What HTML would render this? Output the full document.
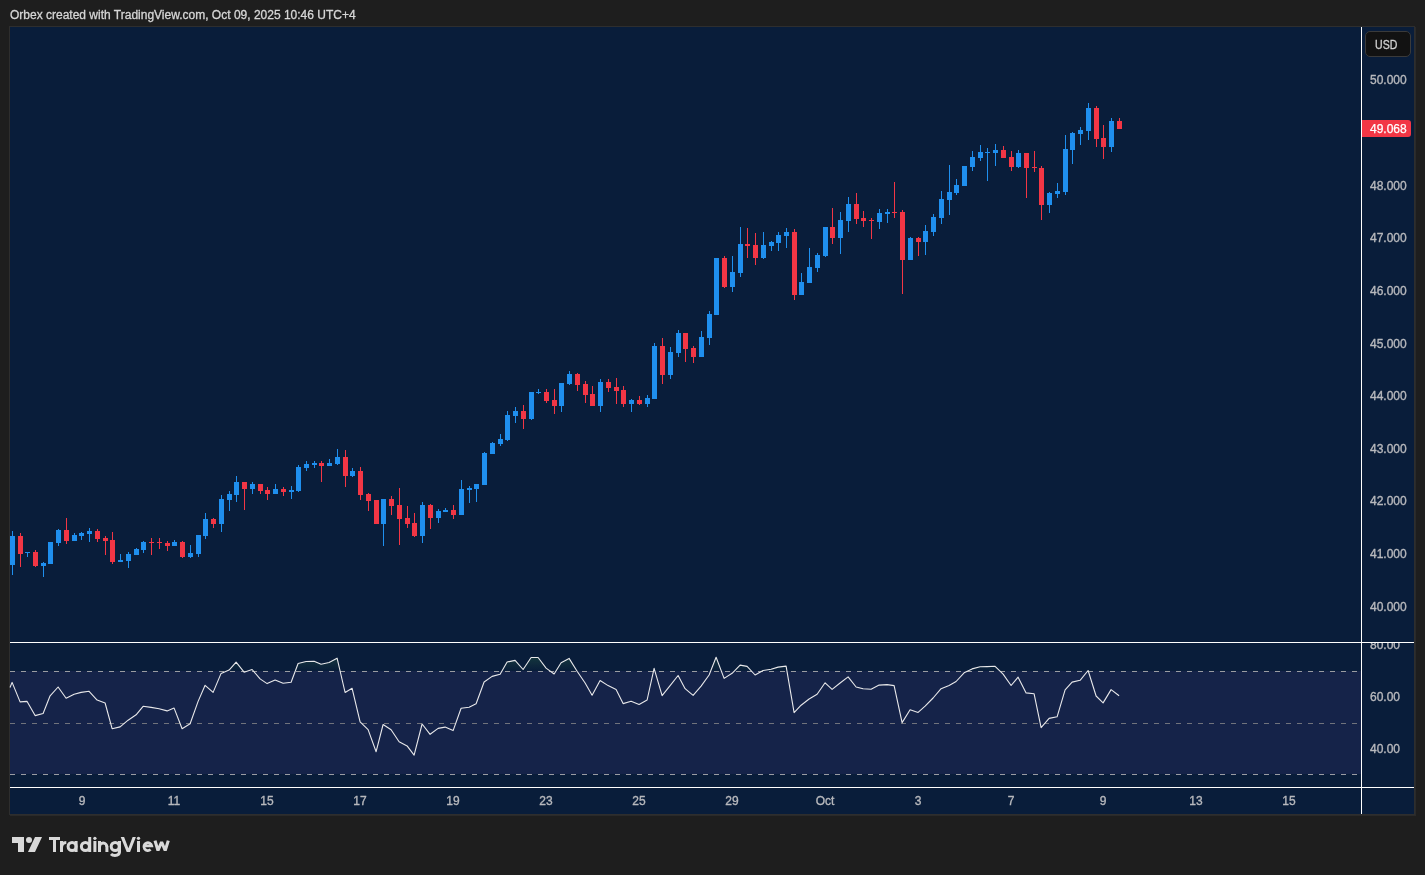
<!DOCTYPE html>
<html><head><meta charset="utf-8"><style>
html,body{margin:0;padding:0;}
body{-webkit-font-smoothing:antialiased;width:1425px;height:875px;background:#1e1e1e;position:relative;overflow:hidden;font-family:"Liberation Sans",sans-serif;}
.title{will-change:transform;-webkit-text-stroke:0.3px #d6d6d6;position:absolute;left:10px;top:8px;font-size:12px;color:#d6d6d6;white-space:nowrap;}
.frame{position:absolute;left:9px;top:26px;width:1404px;height:787px;border:1px solid #2e2e2e;background:#091d3a;box-shadow:1px 1px 0 #2a2a2a;}
svg.ch{position:absolute;left:0;top:0;}
.pl{will-change:transform;-webkit-text-stroke:0.35px #b8b9bd;position:absolute;left:1370px;width:52px;text-align:left;font-size:12px;line-height:14px;color:#b8b9bd;}
.rclip{position:absolute;left:1362px;top:643px;width:52px;height:144px;overflow:hidden;}
.rclip .pl{left:8px;}
.tl{will-change:transform;-webkit-text-stroke:0.35px #b8b9bd;position:absolute;top:794px;width:60px;text-align:center;font-size:12px;line-height:14px;color:#b8b9bd;}
.usd{will-change:transform;position:absolute;left:1365px;top:31px;width:44px;height:24px;border:1px solid #3a3a3a;border-radius:5px;background:#121212;color:#d0d0d0;font-size:12px;line-height:24px;box-sizing:content-box;}
.usd span{position:absolute;left:9px;top:1px;transform:scaleX(0.88);transform-origin:0 0;-webkit-text-stroke:0.3px #d0d0d0;}
.last{will-change:transform;position:absolute;left:1362px;top:120px;width:49px;height:17px;background:#f23645;border-radius:0 3px 3px 0;color:#fff;font-size:12px;line-height:17px;}
.last span{position:absolute;left:8px;top:1px;-webkit-text-stroke:0.25px #fff;}
.logo{position:absolute;left:12px;top:834px;}
.logotxt{will-change:transform;position:absolute;left:49px;top:834px;font-size:20px;font-weight:bold;letter-spacing:0.4px;color:#d9d9d9;white-space:nowrap;}
</style></head><body>
<div class="title">Orbex created with TradingView.com, Oct 09, 2025 10:46 UTC+4</div>
<div class="frame"></div>
<svg class="ch" width="1425" height="875">
<g clip-path="url(#cm)" shape-rendering="crispEdges">
<rect x="12" y="531" width="1" height="44" fill="#1f8fee"/>
<rect x="10" y="536" width="5" height="29" fill="#1f8fee"/>
<rect x="20" y="533" width="1" height="34" fill="#f23645"/>
<rect x="18" y="536" width="5" height="18" fill="#f23645"/>
<rect x="27" y="552" width="1" height="5" fill="#1f8fee"/>
<rect x="25" y="552" width="5" height="1" fill="#1f8fee"/>
<rect x="35" y="550" width="1" height="17" fill="#f23645"/>
<rect x="33" y="552" width="5" height="14" fill="#f23645"/>
<rect x="43" y="562" width="1" height="15" fill="#1f8fee"/>
<rect x="41" y="563" width="5" height="3" fill="#1f8fee"/>
<rect x="50" y="542" width="1" height="22" fill="#1f8fee"/>
<rect x="48" y="542" width="5" height="22" fill="#1f8fee"/>
<rect x="58" y="529" width="1" height="17" fill="#1f8fee"/>
<rect x="56" y="530" width="5" height="13" fill="#1f8fee"/>
<rect x="66" y="518" width="1" height="26" fill="#f23645"/>
<rect x="64" y="530" width="5" height="11" fill="#f23645"/>
<rect x="74" y="533" width="1" height="8" fill="#1f8fee"/>
<rect x="72" y="535" width="5" height="6" fill="#1f8fee"/>
<rect x="81" y="532" width="1" height="8" fill="#1f8fee"/>
<rect x="79" y="533" width="5" height="3" fill="#1f8fee"/>
<rect x="89" y="528" width="1" height="14" fill="#1f8fee"/>
<rect x="87" y="531" width="5" height="3" fill="#1f8fee"/>
<rect x="97" y="529" width="1" height="13" fill="#f23645"/>
<rect x="95" y="531" width="5" height="8" fill="#f23645"/>
<rect x="105" y="536" width="1" height="19" fill="#f23645"/>
<rect x="103" y="538" width="5" height="3" fill="#f23645"/>
<rect x="112" y="532" width="1" height="32" fill="#f23645"/>
<rect x="110" y="540" width="5" height="22" fill="#f23645"/>
<rect x="120" y="554" width="1" height="8" fill="#1f8fee"/>
<rect x="118" y="560" width="5" height="2" fill="#1f8fee"/>
<rect x="128" y="552" width="1" height="16" fill="#1f8fee"/>
<rect x="126" y="554" width="5" height="7" fill="#1f8fee"/>
<rect x="136" y="548" width="1" height="7" fill="#1f8fee"/>
<rect x="134" y="549" width="5" height="6" fill="#1f8fee"/>
<rect x="143" y="541" width="1" height="12" fill="#1f8fee"/>
<rect x="141" y="542" width="5" height="8" fill="#1f8fee"/>
<rect x="151" y="538" width="1" height="17" fill="#f23645"/>
<rect x="149" y="542" width="5" height="1" fill="#f23645"/>
<rect x="159" y="538" width="1" height="11" fill="#f23645"/>
<rect x="157" y="542" width="5" height="1" fill="#f23645"/>
<rect x="167" y="541" width="1" height="10" fill="#f23645"/>
<rect x="165" y="543" width="5" height="3" fill="#f23645"/>
<rect x="174" y="540" width="1" height="6" fill="#1f8fee"/>
<rect x="172" y="542" width="5" height="4" fill="#1f8fee"/>
<rect x="182" y="541" width="1" height="17" fill="#f23645"/>
<rect x="180" y="542" width="5" height="15" fill="#f23645"/>
<rect x="190" y="545" width="1" height="13" fill="#1f8fee"/>
<rect x="188" y="553" width="5" height="4" fill="#1f8fee"/>
<rect x="198" y="535" width="1" height="22" fill="#1f8fee"/>
<rect x="196" y="535" width="5" height="19" fill="#1f8fee"/>
<rect x="205" y="513" width="1" height="26" fill="#1f8fee"/>
<rect x="203" y="519" width="5" height="17" fill="#1f8fee"/>
<rect x="213" y="518" width="1" height="10" fill="#f23645"/>
<rect x="211" y="519" width="5" height="5" fill="#f23645"/>
<rect x="221" y="495" width="1" height="37" fill="#1f8fee"/>
<rect x="219" y="499" width="5" height="25" fill="#1f8fee"/>
<rect x="229" y="491" width="1" height="20" fill="#1f8fee"/>
<rect x="227" y="494" width="5" height="6" fill="#1f8fee"/>
<rect x="236" y="476" width="1" height="26" fill="#1f8fee"/>
<rect x="234" y="482" width="5" height="13" fill="#1f8fee"/>
<rect x="244" y="482" width="1" height="28" fill="#f23645"/>
<rect x="242" y="482" width="5" height="7" fill="#f23645"/>
<rect x="252" y="482" width="1" height="12" fill="#1f8fee"/>
<rect x="250" y="484" width="5" height="5" fill="#1f8fee"/>
<rect x="260" y="484" width="1" height="10" fill="#f23645"/>
<rect x="258" y="484" width="5" height="7" fill="#f23645"/>
<rect x="267" y="487" width="1" height="13" fill="#f23645"/>
<rect x="265" y="490" width="5" height="4" fill="#f23645"/>
<rect x="275" y="484" width="1" height="10" fill="#1f8fee"/>
<rect x="273" y="489" width="5" height="5" fill="#1f8fee"/>
<rect x="283" y="487" width="1" height="9" fill="#f23645"/>
<rect x="281" y="489" width="5" height="3" fill="#f23645"/>
<rect x="291" y="486" width="1" height="13" fill="#1f8fee"/>
<rect x="289" y="490" width="5" height="2" fill="#1f8fee"/>
<rect x="298" y="465" width="1" height="27" fill="#1f8fee"/>
<rect x="296" y="467" width="5" height="24" fill="#1f8fee"/>
<rect x="306" y="461" width="1" height="10" fill="#1f8fee"/>
<rect x="304" y="464" width="5" height="4" fill="#1f8fee"/>
<rect x="314" y="461" width="1" height="7" fill="#1f8fee"/>
<rect x="312" y="463" width="5" height="2" fill="#1f8fee"/>
<rect x="321" y="461" width="1" height="21" fill="#f23645"/>
<rect x="319" y="463" width="5" height="3" fill="#f23645"/>
<rect x="329" y="459" width="1" height="7" fill="#1f8fee"/>
<rect x="327" y="463" width="5" height="3" fill="#1f8fee"/>
<rect x="337" y="449" width="1" height="16" fill="#1f8fee"/>
<rect x="335" y="457" width="5" height="7" fill="#1f8fee"/>
<rect x="345" y="450" width="1" height="37" fill="#f23645"/>
<rect x="343" y="457" width="5" height="19" fill="#f23645"/>
<rect x="352" y="468" width="1" height="9" fill="#1f8fee"/>
<rect x="350" y="471" width="5" height="5" fill="#1f8fee"/>
<rect x="360" y="467" width="1" height="33" fill="#f23645"/>
<rect x="358" y="471" width="5" height="24" fill="#f23645"/>
<rect x="368" y="493" width="1" height="18" fill="#f23645"/>
<rect x="366" y="494" width="5" height="7" fill="#f23645"/>
<rect x="376" y="500" width="1" height="24" fill="#f23645"/>
<rect x="374" y="500" width="5" height="24" fill="#f23645"/>
<rect x="383" y="499" width="1" height="47" fill="#1f8fee"/>
<rect x="381" y="499" width="5" height="25" fill="#1f8fee"/>
<rect x="391" y="496" width="1" height="19" fill="#f23645"/>
<rect x="389" y="499" width="5" height="7" fill="#f23645"/>
<rect x="399" y="488" width="1" height="57" fill="#f23645"/>
<rect x="397" y="505" width="5" height="14" fill="#f23645"/>
<rect x="407" y="506" width="1" height="22" fill="#f23645"/>
<rect x="405" y="518" width="5" height="6" fill="#f23645"/>
<rect x="414" y="513" width="1" height="24" fill="#f23645"/>
<rect x="412" y="523" width="5" height="13" fill="#f23645"/>
<rect x="422" y="502" width="1" height="41" fill="#1f8fee"/>
<rect x="420" y="505" width="5" height="31" fill="#1f8fee"/>
<rect x="430" y="504" width="1" height="25" fill="#f23645"/>
<rect x="428" y="505" width="5" height="13" fill="#f23645"/>
<rect x="438" y="509" width="1" height="14" fill="#1f8fee"/>
<rect x="436" y="511" width="5" height="7" fill="#1f8fee"/>
<rect x="445" y="508" width="1" height="4" fill="#1f8fee"/>
<rect x="443" y="510" width="5" height="2" fill="#1f8fee"/>
<rect x="453" y="505" width="1" height="14" fill="#f23645"/>
<rect x="451" y="510" width="5" height="5" fill="#f23645"/>
<rect x="461" y="480" width="1" height="35" fill="#1f8fee"/>
<rect x="459" y="489" width="5" height="26" fill="#1f8fee"/>
<rect x="469" y="486" width="1" height="17" fill="#1f8fee"/>
<rect x="467" y="488" width="5" height="2" fill="#1f8fee"/>
<rect x="476" y="484" width="1" height="18" fill="#1f8fee"/>
<rect x="474" y="484" width="5" height="5" fill="#1f8fee"/>
<rect x="484" y="452" width="1" height="33" fill="#1f8fee"/>
<rect x="482" y="453" width="5" height="32" fill="#1f8fee"/>
<rect x="492" y="442" width="1" height="12" fill="#1f8fee"/>
<rect x="490" y="443" width="5" height="11" fill="#1f8fee"/>
<rect x="500" y="434" width="1" height="12" fill="#1f8fee"/>
<rect x="498" y="439" width="5" height="5" fill="#1f8fee"/>
<rect x="507" y="411" width="1" height="30" fill="#1f8fee"/>
<rect x="505" y="415" width="5" height="25" fill="#1f8fee"/>
<rect x="515" y="407" width="1" height="16" fill="#1f8fee"/>
<rect x="513" y="411" width="5" height="5" fill="#1f8fee"/>
<rect x="523" y="405" width="1" height="24" fill="#f23645"/>
<rect x="521" y="411" width="5" height="8" fill="#f23645"/>
<rect x="531" y="392" width="1" height="28" fill="#1f8fee"/>
<rect x="529" y="392" width="5" height="27" fill="#1f8fee"/>
<rect x="538" y="389" width="1" height="5" fill="#1f8fee"/>
<rect x="536" y="392" width="5" height="1" fill="#1f8fee"/>
<rect x="546" y="389" width="1" height="14" fill="#f23645"/>
<rect x="544" y="392" width="5" height="9" fill="#f23645"/>
<rect x="554" y="389" width="1" height="25" fill="#f23645"/>
<rect x="552" y="400" width="5" height="6" fill="#f23645"/>
<rect x="561" y="383" width="1" height="29" fill="#1f8fee"/>
<rect x="559" y="383" width="5" height="23" fill="#1f8fee"/>
<rect x="569" y="371" width="1" height="14" fill="#1f8fee"/>
<rect x="567" y="374" width="5" height="10" fill="#1f8fee"/>
<rect x="577" y="373" width="1" height="18" fill="#f23645"/>
<rect x="575" y="374" width="5" height="11" fill="#f23645"/>
<rect x="585" y="381" width="1" height="22" fill="#f23645"/>
<rect x="583" y="384" width="5" height="11" fill="#f23645"/>
<rect x="592" y="386" width="1" height="20" fill="#f23645"/>
<rect x="590" y="394" width="5" height="12" fill="#f23645"/>
<rect x="600" y="379" width="1" height="33" fill="#1f8fee"/>
<rect x="598" y="382" width="5" height="24" fill="#1f8fee"/>
<rect x="608" y="379" width="1" height="13" fill="#f23645"/>
<rect x="606" y="382" width="5" height="6" fill="#f23645"/>
<rect x="616" y="378" width="1" height="26" fill="#f23645"/>
<rect x="614" y="387" width="5" height="4" fill="#f23645"/>
<rect x="623" y="386" width="1" height="21" fill="#f23645"/>
<rect x="621" y="390" width="5" height="14" fill="#f23645"/>
<rect x="631" y="399" width="1" height="13" fill="#1f8fee"/>
<rect x="629" y="400" width="5" height="4" fill="#1f8fee"/>
<rect x="639" y="396" width="1" height="9" fill="#f23645"/>
<rect x="637" y="400" width="5" height="4" fill="#f23645"/>
<rect x="647" y="395" width="1" height="12" fill="#1f8fee"/>
<rect x="645" y="398" width="5" height="6" fill="#1f8fee"/>
<rect x="654" y="343" width="1" height="56" fill="#1f8fee"/>
<rect x="652" y="346" width="5" height="53" fill="#1f8fee"/>
<rect x="662" y="338" width="1" height="46" fill="#f23645"/>
<rect x="660" y="346" width="5" height="29" fill="#f23645"/>
<rect x="670" y="347" width="1" height="32" fill="#1f8fee"/>
<rect x="668" y="352" width="5" height="23" fill="#1f8fee"/>
<rect x="678" y="330" width="1" height="27" fill="#1f8fee"/>
<rect x="676" y="333" width="5" height="20" fill="#1f8fee"/>
<rect x="685" y="333" width="1" height="29" fill="#f23645"/>
<rect x="683" y="333" width="5" height="16" fill="#f23645"/>
<rect x="693" y="346" width="1" height="17" fill="#f23645"/>
<rect x="691" y="348" width="5" height="9" fill="#f23645"/>
<rect x="701" y="331" width="1" height="26" fill="#1f8fee"/>
<rect x="699" y="337" width="5" height="20" fill="#1f8fee"/>
<rect x="709" y="311" width="1" height="34" fill="#1f8fee"/>
<rect x="707" y="314" width="5" height="24" fill="#1f8fee"/>
<rect x="716" y="258" width="1" height="57" fill="#1f8fee"/>
<rect x="714" y="258" width="5" height="57" fill="#1f8fee"/>
<rect x="724" y="256" width="1" height="32" fill="#f23645"/>
<rect x="722" y="258" width="5" height="29" fill="#f23645"/>
<rect x="732" y="256" width="1" height="36" fill="#1f8fee"/>
<rect x="730" y="272" width="5" height="15" fill="#1f8fee"/>
<rect x="740" y="227" width="1" height="50" fill="#1f8fee"/>
<rect x="738" y="244" width="5" height="29" fill="#1f8fee"/>
<rect x="747" y="228" width="1" height="30" fill="#f23645"/>
<rect x="745" y="244" width="5" height="2" fill="#f23645"/>
<rect x="755" y="233" width="1" height="32" fill="#f23645"/>
<rect x="753" y="245" width="5" height="13" fill="#f23645"/>
<rect x="763" y="232" width="1" height="27" fill="#1f8fee"/>
<rect x="761" y="245" width="5" height="13" fill="#1f8fee"/>
<rect x="771" y="241" width="1" height="10" fill="#1f8fee"/>
<rect x="769" y="242" width="5" height="4" fill="#1f8fee"/>
<rect x="778" y="232" width="1" height="19" fill="#1f8fee"/>
<rect x="776" y="235" width="5" height="8" fill="#1f8fee"/>
<rect x="786" y="228" width="1" height="20" fill="#1f8fee"/>
<rect x="784" y="232" width="5" height="4" fill="#1f8fee"/>
<rect x="794" y="229" width="1" height="71" fill="#f23645"/>
<rect x="792" y="232" width="5" height="63" fill="#f23645"/>
<rect x="801" y="273" width="1" height="22" fill="#1f8fee"/>
<rect x="799" y="282" width="5" height="13" fill="#1f8fee"/>
<rect x="809" y="248" width="1" height="35" fill="#1f8fee"/>
<rect x="807" y="267" width="5" height="16" fill="#1f8fee"/>
<rect x="817" y="253" width="1" height="19" fill="#1f8fee"/>
<rect x="815" y="255" width="5" height="13" fill="#1f8fee"/>
<rect x="825" y="227" width="1" height="30" fill="#1f8fee"/>
<rect x="823" y="227" width="5" height="29" fill="#1f8fee"/>
<rect x="832" y="208" width="1" height="36" fill="#f23645"/>
<rect x="830" y="227" width="5" height="11" fill="#f23645"/>
<rect x="840" y="212" width="1" height="42" fill="#1f8fee"/>
<rect x="838" y="220" width="5" height="18" fill="#1f8fee"/>
<rect x="848" y="197" width="1" height="35" fill="#1f8fee"/>
<rect x="846" y="204" width="5" height="17" fill="#1f8fee"/>
<rect x="856" y="193" width="1" height="31" fill="#f23645"/>
<rect x="854" y="204" width="5" height="15" fill="#f23645"/>
<rect x="863" y="211" width="1" height="16" fill="#f23645"/>
<rect x="861" y="218" width="5" height="3" fill="#f23645"/>
<rect x="871" y="218" width="1" height="21" fill="#f23645"/>
<rect x="869" y="220" width="5" height="1" fill="#f23645"/>
<rect x="879" y="209" width="1" height="20" fill="#1f8fee"/>
<rect x="877" y="213" width="5" height="9" fill="#1f8fee"/>
<rect x="887" y="209" width="1" height="14" fill="#1f8fee"/>
<rect x="885" y="212" width="5" height="2" fill="#1f8fee"/>
<rect x="894" y="182" width="1" height="36" fill="#f23645"/>
<rect x="892" y="212" width="5" height="1" fill="#f23645"/>
<rect x="902" y="210" width="1" height="84" fill="#f23645"/>
<rect x="900" y="212" width="5" height="48" fill="#f23645"/>
<rect x="910" y="237" width="1" height="23" fill="#1f8fee"/>
<rect x="908" y="238" width="5" height="22" fill="#1f8fee"/>
<rect x="918" y="237" width="1" height="19" fill="#f23645"/>
<rect x="916" y="238" width="5" height="4" fill="#f23645"/>
<rect x="925" y="225" width="1" height="30" fill="#1f8fee"/>
<rect x="923" y="231" width="5" height="11" fill="#1f8fee"/>
<rect x="933" y="214" width="1" height="22" fill="#1f8fee"/>
<rect x="931" y="217" width="5" height="15" fill="#1f8fee"/>
<rect x="941" y="191" width="1" height="33" fill="#1f8fee"/>
<rect x="939" y="199" width="5" height="19" fill="#1f8fee"/>
<rect x="949" y="165" width="1" height="50" fill="#1f8fee"/>
<rect x="947" y="192" width="5" height="8" fill="#1f8fee"/>
<rect x="956" y="179" width="1" height="16" fill="#1f8fee"/>
<rect x="954" y="185" width="5" height="8" fill="#1f8fee"/>
<rect x="964" y="166" width="1" height="20" fill="#1f8fee"/>
<rect x="962" y="166" width="5" height="20" fill="#1f8fee"/>
<rect x="972" y="151" width="1" height="20" fill="#1f8fee"/>
<rect x="970" y="157" width="5" height="10" fill="#1f8fee"/>
<rect x="980" y="145" width="1" height="16" fill="#1f8fee"/>
<rect x="978" y="152" width="5" height="6" fill="#1f8fee"/>
<rect x="987" y="148" width="1" height="33" fill="#1f8fee"/>
<rect x="985" y="152" width="5" height="1" fill="#1f8fee"/>
<rect x="995" y="144" width="1" height="22" fill="#1f8fee"/>
<rect x="993" y="150" width="5" height="3" fill="#1f8fee"/>
<rect x="1003" y="146" width="1" height="12" fill="#f23645"/>
<rect x="1001" y="150" width="5" height="8" fill="#f23645"/>
<rect x="1011" y="151" width="1" height="20" fill="#f23645"/>
<rect x="1009" y="157" width="5" height="10" fill="#f23645"/>
<rect x="1018" y="150" width="1" height="18" fill="#1f8fee"/>
<rect x="1016" y="153" width="5" height="14" fill="#1f8fee"/>
<rect x="1026" y="153" width="1" height="45" fill="#f23645"/>
<rect x="1024" y="153" width="5" height="15" fill="#f23645"/>
<rect x="1034" y="151" width="1" height="21" fill="#f23645"/>
<rect x="1032" y="167" width="5" height="1" fill="#f23645"/>
<rect x="1041" y="166" width="1" height="54" fill="#f23645"/>
<rect x="1039" y="168" width="5" height="37" fill="#f23645"/>
<rect x="1049" y="192" width="1" height="21" fill="#1f8fee"/>
<rect x="1047" y="193" width="5" height="12" fill="#1f8fee"/>
<rect x="1057" y="183" width="1" height="15" fill="#1f8fee"/>
<rect x="1055" y="191" width="5" height="3" fill="#1f8fee"/>
<rect x="1065" y="135" width="1" height="60" fill="#1f8fee"/>
<rect x="1063" y="149" width="5" height="43" fill="#1f8fee"/>
<rect x="1072" y="132" width="1" height="32" fill="#1f8fee"/>
<rect x="1070" y="133" width="5" height="17" fill="#1f8fee"/>
<rect x="1080" y="127" width="1" height="18" fill="#1f8fee"/>
<rect x="1078" y="130" width="5" height="4" fill="#1f8fee"/>
<rect x="1088" y="103" width="1" height="37" fill="#1f8fee"/>
<rect x="1086" y="108" width="5" height="23" fill="#1f8fee"/>
<rect x="1096" y="106" width="1" height="41" fill="#f23645"/>
<rect x="1094" y="108" width="5" height="31" fill="#f23645"/>
<rect x="1103" y="125" width="1" height="34" fill="#f23645"/>
<rect x="1101" y="138" width="5" height="9" fill="#f23645"/>
<rect x="1111" y="118" width="1" height="34" fill="#1f8fee"/>
<rect x="1109" y="121" width="5" height="26" fill="#1f8fee"/>
<rect x="1119" y="118" width="1" height="11" fill="#f23645"/>
<rect x="1117" y="121" width="5" height="8" fill="#f23645"/>
</g>
<rect x="10" y="671" width="1351" height="103" fill="#152349"/>
<defs><clipPath id="cm"><rect x="10" y="27" width="1351" height="615"/></clipPath><clipPath id="ob"><rect x="10" y="642" width="1351" height="29"/></clipPath><linearGradient id="gob" gradientUnits="userSpaceOnUse" x1="0" y1="593" x2="0" y2="671"><stop offset="0" stop-color="#4caf50" stop-opacity="1"/><stop offset="1" stop-color="#4caf50" stop-opacity="0"/></linearGradient></defs>
<polygon points="10,671 10.0,687.5 12.1,682.4 20.1,701.9 27.1,701.4 35.1,715.6 43.1,713.5 50.1,695.8 58.1,687.0 66.1,698.3 74.1,694.2 81.1,692.4 89.1,691.3 97.1,700.1 105.1,703.0 112.1,728.7 120.1,726.9 128.1,720.2 136.1,714.8 143.1,706.3 151.1,707.4 159.1,708.8 167.1,710.9 174.1,708.1 182.1,728.7 190.1,723.8 198.1,701.4 205.1,685.3 213.1,692.4 221.1,673.4 229.1,670.1 236.1,662.2 244.1,672.2 252.1,669.5 260.1,678.9 267.1,683.6 275.1,680.0 283.1,683.3 291.1,682.2 298.1,663.5 306.1,661.5 314.1,661.2 321.1,664.3 329.1,662.5 337.1,658.2 345.1,692.5 352.1,688.3 360.1,721.9 368.1,729.6 376.1,751.7 383.1,724.5 391.1,729.8 399.1,741.8 407.1,745.9 414.1,755.1 422.1,724.0 430.1,734.3 438.1,728.4 445.1,727.1 453.1,730.6 461.1,708.2 469.1,707.2 476.1,703.8 484.1,682.0 492.1,676.4 500.1,674.3 507.1,662.0 515.1,660.4 523.1,669.5 531.1,657.5 538.1,657.5 546.1,668.1 554.1,674.0 561.1,662.7 569.1,658.4 577.1,671.2 585.1,683.0 592.1,695.2 600.1,680.5 608.1,685.6 616.1,689.4 623.1,703.6 631.1,701.3 639.1,704.4 647.1,700.0 654.1,668.4 662.1,695.6 670.1,685.6 678.1,675.5 685.1,688.7 693.1,695.4 701.1,686.1 709.1,675.0 716.1,657.3 724.1,678.4 732.1,673.3 740.1,665.1 747.1,666.4 755.1,675.0 763.1,670.5 771.1,669.2 778.1,667.1 786.1,666.1 794.1,712.7 801.1,705.2 809.1,699.0 817.1,694.2 825.1,682.8 832.1,689.4 840.1,683.0 848.1,676.9 856.1,687.0 863.1,688.7 871.1,689.2 879.1,685.1 887.1,684.6 894.1,685.6 902.1,722.6 910.1,709.8 918.1,712.4 925.1,706.2 933.1,698.0 941.1,688.7 949.1,685.4 956.1,681.5 964.1,672.8 972.1,668.9 980.1,666.8 987.1,666.6 995.1,666.3 1003.1,674.1 1011.1,685.5 1018.1,677.2 1026.1,692.9 1034.1,693.8 1041.1,727.6 1049.1,718.4 1057.1,716.8 1065.1,689.9 1072.1,682.1 1080.1,680.3 1088.1,670.5 1096.1,696.0 1103.1,702.9 1111.1,689.6 1119.1,695.8 1119.1,671" fill="url(#gob)" clip-path="url(#ob)" opacity="1"/>
<line x1="10" y1="671.5" x2="1361" y2="671.5" stroke="#9a9ca3" stroke-width="1" stroke-dasharray="5 6"/>
<line x1="10" y1="723.5" x2="1361" y2="723.5" stroke="#70737c" stroke-width="1" stroke-dasharray="5 6"/>
<line x1="10" y1="774.5" x2="1361" y2="774.5" stroke="#9a9ca3" stroke-width="1" stroke-dasharray="5 6"/>
<polyline points="10.0,687.5 12.1,682.4 20.1,701.9 27.1,701.4 35.1,715.6 43.1,713.5 50.1,695.8 58.1,687.0 66.1,698.3 74.1,694.2 81.1,692.4 89.1,691.3 97.1,700.1 105.1,703.0 112.1,728.7 120.1,726.9 128.1,720.2 136.1,714.8 143.1,706.3 151.1,707.4 159.1,708.8 167.1,710.9 174.1,708.1 182.1,728.7 190.1,723.8 198.1,701.4 205.1,685.3 213.1,692.4 221.1,673.4 229.1,670.1 236.1,662.2 244.1,672.2 252.1,669.5 260.1,678.9 267.1,683.6 275.1,680.0 283.1,683.3 291.1,682.2 298.1,663.5 306.1,661.5 314.1,661.2 321.1,664.3 329.1,662.5 337.1,658.2 345.1,692.5 352.1,688.3 360.1,721.9 368.1,729.6 376.1,751.7 383.1,724.5 391.1,729.8 399.1,741.8 407.1,745.9 414.1,755.1 422.1,724.0 430.1,734.3 438.1,728.4 445.1,727.1 453.1,730.6 461.1,708.2 469.1,707.2 476.1,703.8 484.1,682.0 492.1,676.4 500.1,674.3 507.1,662.0 515.1,660.4 523.1,669.5 531.1,657.5 538.1,657.5 546.1,668.1 554.1,674.0 561.1,662.7 569.1,658.4 577.1,671.2 585.1,683.0 592.1,695.2 600.1,680.5 608.1,685.6 616.1,689.4 623.1,703.6 631.1,701.3 639.1,704.4 647.1,700.0 654.1,668.4 662.1,695.6 670.1,685.6 678.1,675.5 685.1,688.7 693.1,695.4 701.1,686.1 709.1,675.0 716.1,657.3 724.1,678.4 732.1,673.3 740.1,665.1 747.1,666.4 755.1,675.0 763.1,670.5 771.1,669.2 778.1,667.1 786.1,666.1 794.1,712.7 801.1,705.2 809.1,699.0 817.1,694.2 825.1,682.8 832.1,689.4 840.1,683.0 848.1,676.9 856.1,687.0 863.1,688.7 871.1,689.2 879.1,685.1 887.1,684.6 894.1,685.6 902.1,722.6 910.1,709.8 918.1,712.4 925.1,706.2 933.1,698.0 941.1,688.7 949.1,685.4 956.1,681.5 964.1,672.8 972.1,668.9 980.1,666.8 987.1,666.6 995.1,666.3 1003.1,674.1 1011.1,685.5 1018.1,677.2 1026.1,692.9 1034.1,693.8 1041.1,727.6 1049.1,718.4 1057.1,716.8 1065.1,689.9 1072.1,682.1 1080.1,680.3 1088.1,670.5 1096.1,696.0 1103.1,702.9 1111.1,689.6 1119.1,695.8" fill="none" stroke="#e8e8ea" stroke-width="1.1" stroke-linejoin="round"/>
<g shape-rendering="crispEdges">
<rect x="1361" y="27" width="1" height="787" fill="#ffffff"/>
<rect x="10" y="642" width="1404" height="1" fill="#ffffff"/>
<rect x="10" y="787" width="1404" height="1" fill="#ffffff"/>
</g>
</svg>
<div class="rclip">
<div class="pl" style="top:-5px">80.00</div>
<div class="pl" style="top:47px">60.00</div>
<div class="pl" style="top:99px">40.00</div>
</div>
<div class="pl" style="top:73.3px">50.000</div>
<div class="pl" style="top:178.6px">48.000</div>
<div class="pl" style="top:231.2px">47.000</div>
<div class="pl" style="top:283.9px">46.000</div>
<div class="pl" style="top:336.5px">45.000</div>
<div class="pl" style="top:389.1px">44.000</div>
<div class="pl" style="top:441.8px">43.000</div>
<div class="pl" style="top:494.4px">42.000</div>
<div class="pl" style="top:547.1px">41.000</div>
<div class="pl" style="top:599.7px">40.000</div>
<div class="tl" style="left:51.5px">9</div>
<div class="tl" style="left:144.4px">11</div>
<div class="tl" style="left:237.3px">15</div>
<div class="tl" style="left:330.2px">17</div>
<div class="tl" style="left:423.1px">19</div>
<div class="tl" style="left:516.0px">23</div>
<div class="tl" style="left:608.9px">25</div>
<div class="tl" style="left:701.8px">29</div>
<div class="tl" style="left:794.7px">Oct</div>
<div class="tl" style="left:887.6px">3</div>
<div class="tl" style="left:980.5px">7</div>
<div class="tl" style="left:1073.4px">9</div>
<div class="tl" style="left:1166.3px">13</div>
<div class="tl" style="left:1259.2px">15</div>
<div class="usd"><span>USD</span></div>
<div class="last"><span>49.068</span></div>
<svg class="logo" width="32" height="20" viewBox="0 0 32 20">
<path d="M0 3h12v15h-6v-9h-6z" fill="#d9d9d9"/>
<circle cx="17" cy="6" r="3" fill="#d9d9d9"/>
<path d="M23 3h7l-7 15h-7z" fill="#d9d9d9"/>
</svg>
<svg class="wm" width="1425" height="875" style="position:absolute;left:0;top:0">
<g fill="#d9d9d9">
<rect x="49" y="837" width="11" height="3"/><rect x="53" y="837" width="3" height="15"/>
<rect x="60" y="841" width="3" height="11"/>
<rect x="74.6" y="841" width="3" height="11"/>
<rect x="88.2" y="837" width="3" height="15"/>
<rect x="93.4" y="841" width="3" height="11"/><circle cx="94.9" cy="838.3" r="1.65"/>
<rect x="98" y="841" width="3" height="11"/><rect x="105.4" y="846.5" width="3" height="5.5"/>
<rect x="118" y="841" width="3" height="11.5"/>
<polygon points="120.7,837 124.1,837 128.4,848.3 132.6,837 135.9,837 130.1,852 126.7,852"/>
<rect x="137" y="841" width="3" height="11"/><circle cx="138.5" cy="838.3" r="1.65"/>
</g>
<g fill="none" stroke="#d9d9d9" stroke-width="3">
<path d="M61.5,848 Q61.5,842.4 66.3,842.4"/>
<circle cx="72.1" cy="846.5" r="4"/>
<circle cx="85.4" cy="846.5" r="4"/>
<path d="M99.5,847 A3.7,3.9 0 0 1 106.9,847"/>
<circle cx="115.2" cy="846.5" r="4"/>
<path d="M119.5,851.5 Q119.5,855.4 115,855.4 Q112.4,855.4 111,853.9"/>
<path d="M143.4,845.9 H151.8 A4,4 0 1 0 150.6,849.6" stroke-width="2.7"/>
<path d="M155,840.6 L158,850.5 L161.6,842 L165.2,850.5 L168.3,840.6" stroke-width="3.1" stroke-linejoin="bevel"/>
</g>
</svg>
</body></html>
